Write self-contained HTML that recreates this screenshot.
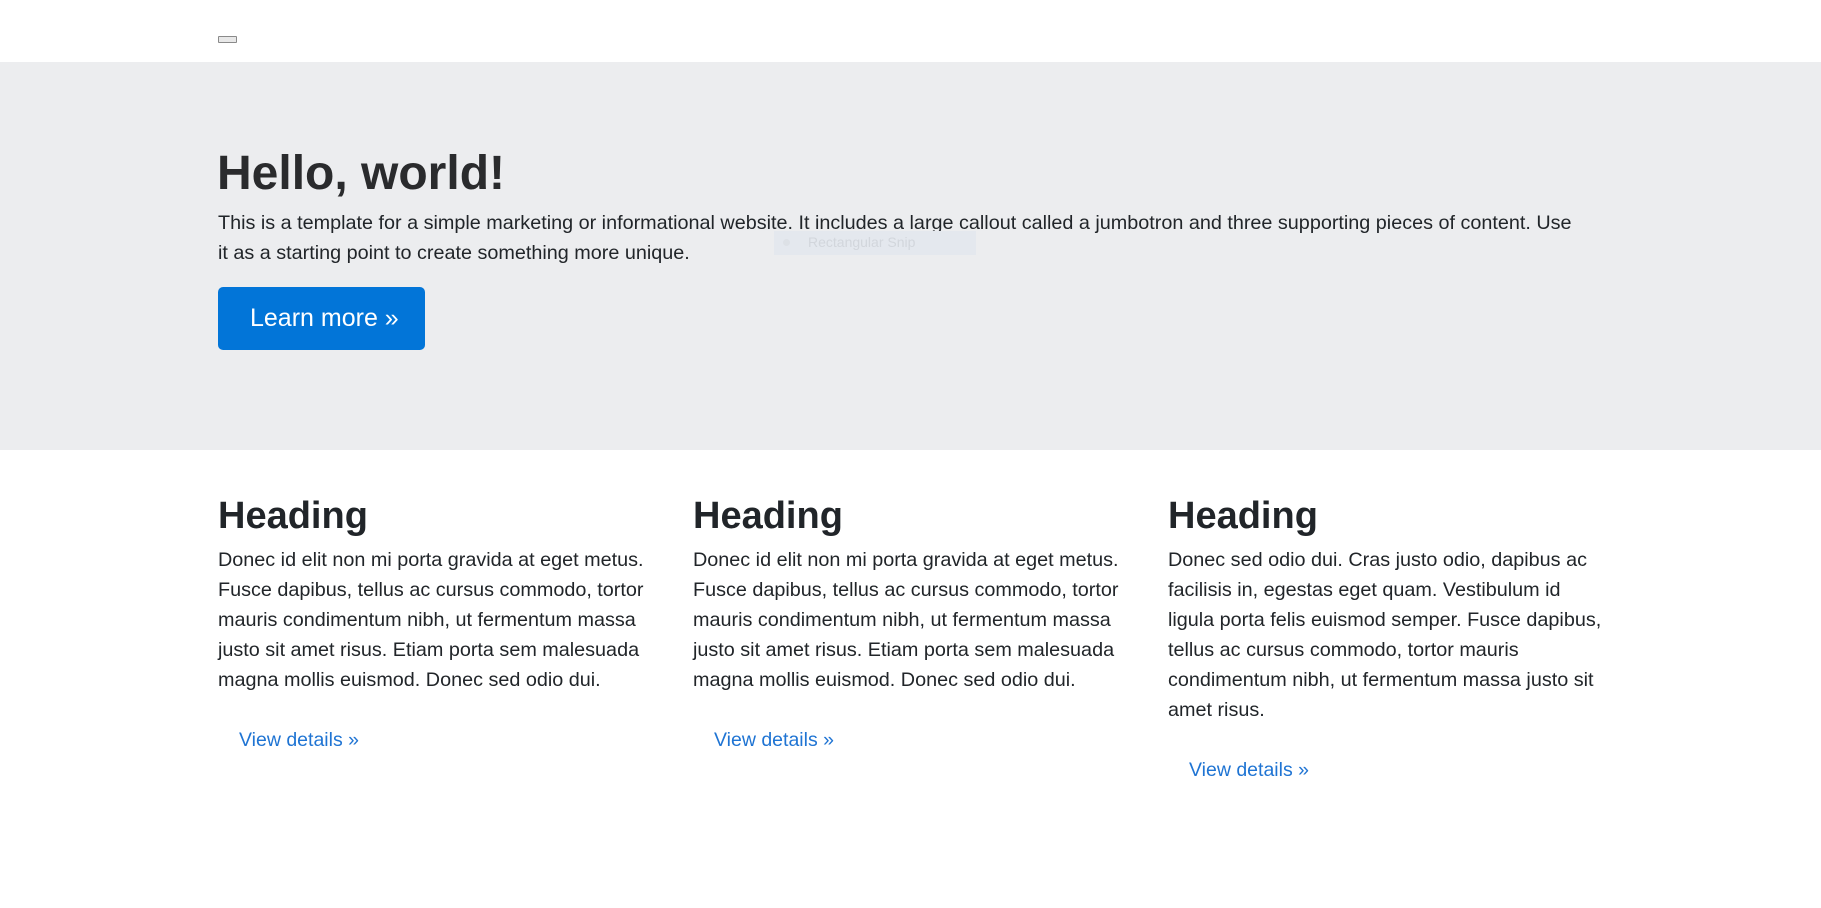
<!DOCTYPE html>
<html><head><meta charset="utf-8"><style>
*{margin:0;padding:0;box-sizing:border-box}
body{width:1821px;height:908px;background:#fff;font-family:"Liberation Sans",sans-serif;color:#212529;position:relative;overflow:hidden}
.a{position:absolute;white-space:nowrap}
.tog{left:218px;top:36px;width:19px;height:7px;border:1px solid #8a8a8a;background:#e8e8e8;border-radius:1px}
.jumbo{left:0;top:62px;width:1821px;height:388px;background:#ecedef}
h1{font-weight:bold;font-size:48px;left:217px;top:144px;line-height:60px;color:#2a2b2d}
.p{font-size:19.8px;line-height:30px}
.btn{left:218px;top:287px;width:207px;height:63px;background:#0275d8;border-radius:5px;color:#fff;font-size:25px;line-height:63px;padding-left:32px}
.snip{left:774px;top:231px;width:202px;height:24px;background:#e4e8ee}
.snip span{position:absolute;left:34px;top:3px;font-size:14px;color:#d2d6dc}
.snip i{position:absolute;left:9px;top:8px;width:7px;height:7px;border-radius:50%;background:#dde1e6}
h2{font-weight:bold;font-size:38px;line-height:48px}
.v{color:#1f74d3;font-size:19.5px;line-height:30px}
</style></head><body>
<div class="a tog"></div>
<div class="a jumbo"></div>
<h1 class="a">Hello, world!</h1>
<div class="a p" style="left:218px;top:208px">This is a template for a simple marketing or informational website. It includes a large callout called a jumbotron and three supporting pieces of content. Use<br>it as a starting point to create something more unique.</div>
<div class="a snip"><i></i><span>Rectangular Snip</span></div>
<div class="a btn">Learn more »</div>

<h2 class="a" style="left:218px;top:492px">Heading</h2>
<div class="a p" style="left:218px;top:545px">Donec id elit non mi porta gravida at eget metus.<br>Fusce dapibus, tellus ac cursus commodo, tortor<br>mauris condimentum nibh, ut fermentum massa<br>justo sit amet risus. Etiam porta sem malesuada<br>magna mollis euismod. Donec sed odio dui.</div>
<div class="a v" style="left:239px;top:725px">View details »</div>

<h2 class="a" style="left:693px;top:492px">Heading</h2>
<div class="a p" style="left:693px;top:545px">Donec id elit non mi porta gravida at eget metus.<br>Fusce dapibus, tellus ac cursus commodo, tortor<br>mauris condimentum nibh, ut fermentum massa<br>justo sit amet risus. Etiam porta sem malesuada<br>magna mollis euismod. Donec sed odio dui.</div>
<div class="a v" style="left:714px;top:725px">View details »</div>

<h2 class="a" style="left:1168px;top:492px">Heading</h2>
<div class="a p" style="left:1168px;top:545px">Donec sed odio dui. Cras justo odio, dapibus ac<br>facilisis in, egestas eget quam. Vestibulum id<br>ligula porta felis euismod semper. Fusce dapibus,<br>tellus ac cursus commodo, tortor mauris<br>condimentum nibh, ut fermentum massa justo sit<br>amet risus.</div>
<div class="a v" style="left:1189px;top:755px">View details »</div>
</body></html>
